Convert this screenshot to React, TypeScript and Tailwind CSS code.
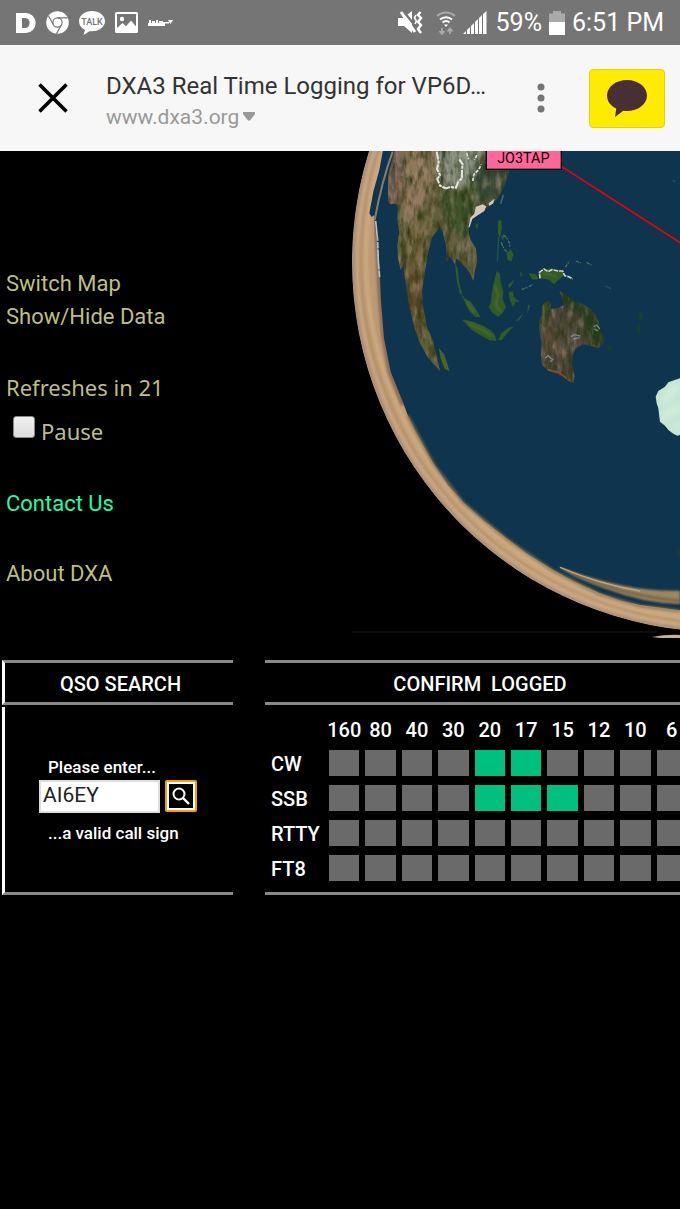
import { useState, type FormEvent } from "react";

const BANDS = ["160", "80", "40", "30", "20", "17", "15", "12", "10", "6"];

const MODES = [
  { name: "CW", logged: ["20", "17"] },
  { name: "SSB", logged: ["20", "17", "15"] },
  { name: "RTTY", logged: [] },
  { name: "FT8", logged: [] },
] as { name: string; logged: string[] }[];

function StatusBar() {
  return (
    <div className="flex h-[45px] items-center justify-between bg-[#757575] pr-4 pl-4 text-white">
      <div className="flex items-center gap-[10px]">
        <svg width="20" height="20" viewBox="0 0 20 20" fill="#fff">
          <path fillRule="evenodd" d="M0 0h10a9.7 10 0 0 1 0 20H0zM6 5v10h3.500c5.500 0 5.500-10 0-10z" />
        </svg>
        <svg width="23" height="23" viewBox="0 0 23 23" fill="none" stroke="#757575" strokeWidth="1.2">
          <circle cx="11.500" cy="11.500" r="11.300" fill="#fff" stroke="none" />
          <circle cx="11.500" cy="11.500" r="4.600" />
          <path d="M11.500 6.900h10.200M7.500 13.800L2.400 5M15.500 13.800l-5.100 9" />
        </svg>
        <svg width="26" height="24" viewBox="0 0 26 24">
          <path d="M13 0C5.800 0 0 4.600 0 10.300c0 3.700 2.300 6.800 6 8.600L4.500 24l6-3.800c8.800 1 15.500-4 15.500-9.900C26 4.600 20.200 0 13 0z" fill="#fff" />
          <text x="13" y="14" textAnchor="middle" fontFamily="Roboto, sans-serif" fontWeight="500" fontSize="9" fill="#757575">TALK</text>
        </svg>
        <svg width="23" height="21" viewBox="0 0 23 21">
          <path fillRule="evenodd" fill="#fff" d="M1.500 0h20A1.500 1.500 0 0 1 23 1.500v18a1.500 1.500 0 0 1-1.500 1.500h-20A1.500 1.500 0 0 1 0 19.500v-18A1.500 1.500 0 0 1 1.500 0zM2 2v14l5.500-5 3.500 3.200L16 8.500l5 6V2z" />
          <circle cx="7" cy="7" r="2.200" fill="#fff" />
        </svg>
        <svg width="25" height="8" viewBox="0 0 25 8" fill="#fff">
          <path d="M0 4h17v3H0zM1 1h2v3H1zM4 2h3v2H4zM8 1h2v3H8zM11 2h4v2h-4zM14 3h7v1.500h-7zM20 1h5l-2.500 4z" />
        </svg>
      </div>

      <div className="flex items-center text-[25px] leading-none">
        <svg width="25" height="23" viewBox="0 0 25 23" className="mr-[13px]">
          <path d="M0 7h5l9-7v22l-8-7H0z" fill="#fff" />
          <path d="M5 0l15 18" stroke="#757575" strokeWidth="2.400" />
          <path d="M3 1l14 20" stroke="#fff" strokeWidth="3" />
          <path d="M22.500 1l-2.500 3 3 3-3 4 3 3-3 4 3 4" fill="none" stroke="#fff" strokeWidth="2.400" />
          <path d="M18 4l-1.500 3 2 3-1.500 3" fill="none" stroke="#fff" strokeWidth="1.600" />
        </svg>
        <svg width="20" height="24" viewBox="0 0 20 24" fill="none" className="mr-[7px]">
          <path d="M1 5a13 13 0 0 1 18 0" stroke="#aaa" strokeWidth="2" />
          <path d="M4 8.500a9 9 0 0 1 12 0M6.500 11.500a5.500 5.500 0 0 1 7 0" stroke="#fff" strokeWidth="2" />
          <path d="M8 13.500h4l-2 2.500z" fill="#fff" />
          <path d="M6 17v5M3.500 20L6 23l2.500-3M14 23v-5M11.500 20.500L14 17.500l2.500 3" stroke="#aaa" strokeWidth="1.800" />
        </svg>
        <svg width="24" height="24" viewBox="0 0 24 24" fill="#fff" className="mr-[9px]">
          <path d="M0 23l3-3v3zM4 19l3-3v7H4zM8 15l3-3v11H8zM12 11l3-3v15h-3zM16 7l3-3v19h-3zM20 3l3.500-3v23H20z" />
        </svg>
        <span>59%</span>
        <svg width="16" height="24" viewBox="0 0 16 24" className="mx-[7px]">
          <path d="M4 0h8v2.500h4V12H0V2.500h4z" fill="#aaa" />
          <path d="M0 11h16v13H0z" fill="#fff" />
        </svg>
        <span>6:51 PM</span>
      </div>
    </div>
  );
}

function BrowserBar() {
  return (
    <header className="flex h-[106px] items-center bg-[#f7f7f7] pr-[15px] pl-[38px]">
      <button type="button" aria-label="Close" className="mr-[38px] shrink-0">
        <svg width="30" height="30" viewBox="0 0 30 30" stroke="#000" strokeWidth="3.600">
          <path d="M1.500 1.500l27 27M28.500 1.500l-27 27" />
        </svg>
      </button>
      <div className="min-w-0 flex-1 pt-[5px]">
        <h1 className="truncate text-[24px] leading-[32px] text-[#333]">DXA3 Real Time Logging for VP6D…</h1>
        <button type="button" className="flex items-center gap-1 text-[21px] leading-[30px] text-[#999]">
          www.dxa3.org
          <svg width="12" height="9" viewBox="0 0 12 9" fill="#999"><path d="M0 0h12v2L7 8.500H5L0 2z" /></svg>
        </button>
      </div>
      <button type="button" aria-label="More options" className="mr-[44px] ml-[36px] shrink-0">
        <svg width="8" height="30" viewBox="0 0 8 30" fill="#757575">
          <circle cx="4" cy="4" r="3.500" />
          <circle cx="4" cy="15" r="3.500" />
          <circle cx="4" cy="26" r="3.500" />
        </svg>
      </button>
      <button type="button" aria-label="Share to chat" className="flex h-[59px] w-[76px] shrink-0 items-center justify-center rounded border border-[#e5d400] bg-[#ffeb00]">
        <svg width="40" height="37" viewBox="0 0 40 37" fill="#472f33">
          <path d="M20 0C9 0 0 6.800 0 15.600c0 5.700 3.600 10.300 9.300 13L8 37l8.300-6.200c1.200.2 2.400.3 3.700.3 11 0 20-6.800 20-15.500S31 0 20 0z" />
        </svg>
      </button>
    </header>
  );
}

function Globe() {
  return (
    <svg width="328" height="487" viewBox="36 18 984 1461" className="shrink-0" role="img" aria-label="Contact map">
      <defs>
        <filter id="terrain" x="0" y="0" width="1" height="1" colorInterpolationFilters="sRGB">
          <feTurbulence type="fractalNoise" baseFrequency="0.06 0.022" numOctaves="4" seed="4" result="n" />
          <feColorMatrix in="n" type="matrix" values="0 0 0 0 0.16  0 0 0 0 0.2  0 0 0 0 0.08  2 0 0 0 -0.800" result="d" />
          <feColorMatrix in="n" type="matrix" values="0 0 0 0 0.600  0 0 0 0 0.540  0 0 0 0 0.430  0 1.600 0 0 -0.750" result="l" />
          <feComposite in="d" in2="SourceGraphic" operator="in" result="dark" />
          <feComposite in="l" in2="SourceGraphic" operator="in" result="light" />
          <feMerge><feMergeNode in="SourceGraphic" /><feMergeNode in="light" /><feMergeNode in="dark" /></feMerge>
        </filter>
        <filter id="soft" x="-30%" y="-30%" width="160%" height="160%"><feGaussianBlur stdDeviation="9" /></filter>
        <filter id="blend" x="-5%" y="-5%" width="110%" height="110%"><feGaussianBlur stdDeviation="3" /></filter>
        <linearGradient id="rim" x1="0" y1="0" x2="0" y2="1">
          <stop offset="0" stopColor="#ad8b6e" />
          <stop offset="0.300" stopColor="#c19e7c" />
          <stop offset="0.600" stopColor="#bd996f" />
          <stop offset="1" stopColor="#cba77c" />
        </linearGradient>
        <clipPath id="disc"><circle cx="1146" cy="351" r="1110" /></clipPath>
        <clipPath id="asia">
          <path d="M165 10L145 90 143 165 150 178 165 176 173 180 171 220 178 260 172 300 174 340 182 375 190 360 194 395 205 470 222 545 240 595 265 640 300 678 292 640 280 590 262 550 250 490 246 440 255 380 265 320 275 280 300 245 308 262 318 300 320 350 330 335 345 358 350 340 370 360 388 382 400 408 405 375 412 350 408 310 392 285 385 258 386 235 400 208 425 205 450 180 470 162 485 140 498 110 508 75 512 10Z" />
        </clipPath>
        <clipPath id="oz">
          <path d="M608 480L625 466 634 478 632 492 655 488 672 480 665 455 658 438 682 452 700 468 728 476 752 492 768 512 778 535 780 552 792 575 790 595 775 610 750 602 728 598 705 612 698 632 696 660 704 692 700 714 680 705 655 688 625 678 606 660 602 625 605 598 598 560 596 530 606 510Z" />
        </clipPath>
      </defs>
      <rect x="36" y="18" width="984" height="1461" fill="#000" />
      <path d="M36 1461H950" stroke="#141414" strokeWidth="4" />
      <path d="M935 1476q45-8 85-6v9h-60z" fill="#c9b190" />

      <g clipPath="url(#disc)">
        <circle cx="1146" cy="351" r="1110" fill="url(#rim)" />
        {/* stretched coastline streaks on the rim */}
        <g fill="none" filter="url(#blend)">
          <circle cx="1146" cy="351" r="1106" stroke="#a68e7c" strokeWidth="9" />
          <circle cx="1146" cy="351" r="1094" stroke="#c9a582" strokeWidth="8" />
          <circle cx="1150" cy="348" r="1088" stroke="#a98a67" strokeWidth="4" />
          <circle cx="1158" cy="342" r="1080" stroke="#cca881" strokeWidth="12" />
          <circle cx="1170" cy="328" r="1074" stroke="#ba9875" strokeWidth="5" />
        </g>
        <path d="M108 230L114 330 122 470 132 580 150 680 190 780" fill="none" stroke="#8d6e58" strokeWidth="16" filter="url(#blend)" />
        <path
          d="M130 10L118 75 100 140 88 205 95 216 103 210 104 230 112 300 116 340 120 400 123 470 132 580 152 680 190 775 203 810 225 855 280 955 325 1020 370 1072 430 1125 500 1180 560 1225 640 1275 700 1308 780 1345 840 1366 900 1380 1020 1396 1030 1396 1030 10Z"
          fill="#0e354d"
        />
        <path d="M158 20Q125 110 104 225" fill="none" stroke="#8c7a69" strokeWidth="6" />
        <path d="M107 228l6 60 2 60 4 50" fill="none" stroke="#c3beb4" strokeWidth="5" strokeDasharray="60 3 20 3" />
        <path d="M203 812L280 957 370 1074 500 1182 640 1278 780 1348 900 1383 1020 1398" fill="none" stroke="#8a7350" strokeWidth="10" opacity="0.700" filter="url(#blend)" />
        <path d="M655 1265Q760 1304 850 1322T1020 1337V1377Q910 1374 800 1332 700 1296 655 1265Z" fill="#a08660" filter="url(#blend)" />
        <path d="M700 1287Q850 1352 1020 1368" fill="none" stroke="#6d5c3c" strokeWidth="9" opacity="0.700" filter="url(#blend)" />
        <path d="M660 1267Q780 1318 900 1338" fill="none" stroke="#c3a47a" strokeWidth="4" />

        <g clipPath="url(#asia)">
          <g filter="url(#terrain)">
            <rect x="130" y="0" width="400" height="700" fill="#625d38" />
            <g filter="url(#soft)">
              <path d="M140 0h70l-30 180h-50z" fill="#84695c" />
              <path d="M210 0h80l-10 110-55 130-40 10z" fill="#92795c" />
              <path d="M290 0h140l-10 110-90 20-40-30z" fill="#8d9686" />
              <path d="M400 60l70-60h60l-30 130-90 60z" fill="#34483a" />
              <path d="M290 140l130-20-30 100 10 60-70-20z" fill="#3f572a" />
              <path d="M190 250l60 10 10 90-30 80-30 20z" fill="#716039" />
              <path d="M195 380l50 10 5 150-30 20z" fill="#604a28" />
              <path d="M230 510l30 50 50 120z" fill="#626331" />
              <path d="M345 270l50 10 10 80-40-10z" fill="#716c50" />
            </g>
          </g>
          <path d="M178 180Q190 70 232 18M195 230Q210 100 255 40M215 250q30-80 55-160M240 265q35-50 45-120" fill="none" stroke="#ac8b69" strokeWidth="6" opacity="0.500" filter="url(#blend)" />
        </g>
        <path d="M290 20l6 32-5 20 9 18-8 12 8 20 18 8 12-4 18 2 6-16 12-14 0-25 2-15-10-15" fill="none" stroke="#e5e5dc" strokeWidth="6" strokeDasharray="24 3 10 2" />
        <path d="M398 108l4-20 14-14 8-16M410 30l-6 15M380 25l6 18" fill="none" stroke="#d9dcd2" strokeWidth="5" strokeDasharray="10 4" />
        <path d="M385 248l6-30 12-12 4-20 20-8 12 6-6 14-22 14-14 10-8 24zM446 175l18-14-4 14-12 8z" fill="#d9c5b7" />
        <path d="M490 150l-8 26" stroke="#46626f" strokeWidth="5" />
        <path d="M296 608l16 20 10 28 6 22-14-6-12-32z" fill="#4c6228" />

        {/* south-east asia */}
        <g fill="#305a26">
          <path d="M345 355L353 370 358 415 366 445 360 448 350 405ZM362 445L374 460 392 470 408 492 422 516 406 516 388 498 374 470Z" />
          <path d="M366 524L376 524 400 530 430 542 450 554 464 568 470 588 448 586 420 570 395 554ZM474 585L484 565 505 548 520 545 500 566 486 584ZM526 530L540 514 550 506 538 524ZM564 478L570 482 562 508Z" />
          <path d="M470 378L480 386 482 410 490 440 488 462 498 486 488 504 474 516 456 502 446 486 452 474 456 440 462 412Z" />
          <path d="M504 420L524 402 516 418 508 430ZM506 442L518 438 522 456 538 470 526 470 520 488 510 466ZM540 378L548 388 542 396ZM565 384L587 388 596 402 578 404Z" />
          <path d="M474 228L484 224 486 250 480 278 474 266ZM500 325L512 312 520 328 514 350 502 344ZM482 270L494 276 488 286ZM405 240L415 235 412 255Z" />
          <path d="M598 382L628 370 666 376 674 390 656 404 642 418 626 404 600 400Z" />
          <path d="M895 503L910 503 906 516 912 516 898 530ZM895 534L901 546 898 572 892 562ZM804 603L818 606 814 618 804 614ZM1008 1225L1020 1213V1237Z" fill="#164128" />
        </g>
        <path d="M463 420l12 30-8 30 14 20M385 535l40 18 30 20M610 385l40 10M380 470l24 34" fill="none" stroke="#456c2f" strokeWidth="7" filter="url(#blend)" />
        <path d="M600 400l-2-18 14-10 12 8 12-6 18 4 14 0 6 14 14 4 10 6" fill="none" stroke="#ccd0c0" strokeWidth="5" strokeDasharray="14 3" />
        <path d="M676 366l14-20M708 348l14 6M740 352l14 8M490 270q18 12 20 36M484 292q8 26 18 28M545 434l20-8 14-8" fill="none" stroke="#4b7268" strokeWidth="4" strokeDasharray="10 3 5 5" />
        <path d="M795 423l18 8M998 106l8 5M472 350l4-75" stroke="#254f5a" strokeWidth="4" />

        <g clipPath="url(#oz)">
          <g filter="url(#terrain)">
            <rect x="580" y="420" width="230" height="310" fill="#4f463a" />
            <g filter="url(#soft)">
              <path d="M590 450h60l-20 60-40 50z" fill="#3a5124" />
              <path d="M660 430l80 40 60 100-10 50-40-20-20-80-60-50z" fill="#213c1c" />
              <path d="M605 540l50 20 20 60-50 20-20-20z" fill="#5a4c38" />
              <path d="M680 560h40l-20 40h-30z" fill="#605950" />
              <path d="M640 680l60 10v30l-50-20z" fill="#52301f" />
            </g>
          </g>
          <path d="M615 640l10-8 10 10M630 650l10-8M693 575l10-6 18 4M700 582l18-4M762 545l8-5 10 12M764 553l10 4" fill="none" stroke="#8f949b" strokeWidth="4" opacity="0.800" />
          <path d="M622 674l34 8 24 18" fill="none" stroke="#8b5336" strokeWidth="4" />
        </g>

        {/* antarctica */}
        <path d="M1030 696L1002 706 985 712 975 725 955 738 947 755 950 775 955 790 960 830 975 842 985 855 1000 866 1012 872 1030 868Z" fill="#c5e5d2" />
        <path d="M1020 722l-26 14-12 24-14 10M1020 790l-30 10-20 20M1020 840l-18 8" fill="none" stroke="#eefbf2" strokeWidth="14" opacity="0.500" filter="url(#soft)" />

        <path d="M664 64l366 235" stroke="#f00000" strokeWidth="5" />
      </g>
      <rect x="439" y="-20" width="225" height="93" fill="#ff6699" stroke="#000" strokeWidth="4" />
      <text x="550" y="53" textAnchor="middle" fontFamily="Roboto, sans-serif" fontSize="43" fill="#100008">JO3TAP</text>
    </svg>
  );
}

function SideMenu() {
  const [paused, setPaused] = useState(false);
  return (
    <nav className="flex min-w-0 flex-1 flex-col items-start pt-[116px] pl-[6px] text-[22px] leading-[33px] text-[#bfbf7f]">
      <a href="#map">Switch Map</a>
      <a href="#data">Show/Hide Data</a>
      <p className="mt-[38px] font-['Noto_Sans']">Refreshes in 21</p>
      <label className="mt-[11px] flex items-center gap-[6px] pl-[7px] font-['Noto_Sans']">
        <input
          type="checkbox"
          checked={paused}
          onChange={(e) => setPaused(e.target.checked)}
          className="mb-[10px] size-[22px] appearance-none rounded-[3px] border border-[#888] bg-linear-to-b from-[#f0f0f0] to-[#dcdcdc] checked:bg-[#999]"
        />
        Pause
      </label>
      <a href="#contact" className="mt-[39px] text-[#1effa5]">Contact Us</a>
      <a href="#about" className="mt-[37px]">About DXA</a>
    </nav>
  );
}

function QsoSearch() {
  const [call, setCall] = useState("AI6EY");
  const submit = (e: FormEvent) => e.preventDefault();
  return (
    <section className="flex w-[231px] shrink-0 flex-col gap-[2px]">
      <h2 className="border-y-[3px] border-l-[3px] border-y-[#888] border-l-white pt-[3px] pl-[3px] text-center text-[20px] leading-[36px] font-medium">QSO SEARCH</h2>
      <form onSubmit={submit} className="flex flex-1 flex-col justify-center border-b-[3px] border-l-[3px] border-b-[#888] border-l-white pl-[34px] text-[17px] font-medium">
        <label htmlFor="call" className="mb-[2px] pl-[9px] leading-[22px]">Please enter...</label>
        <div className="flex items-center gap-[5px]">
          <input
            id="call"
            value={call}
            onChange={(e) => setCall(e.target.value)}
            className="h-[33px] w-[121px] border-2 border-[#ddd] bg-white px-[2px] pb-[2px] text-[21px] font-normal text-[#222] outline-none"
          />
          <button type="submit" aria-label="Search" className="flex size-[32px] items-center justify-center rounded-[2px] border-2 border-[#f5a10a] bg-white p-[2px]">
            <span className="flex size-full items-center justify-center bg-black">
              <svg width="18" height="18" viewBox="0 0 18 18" fill="none" stroke="#fff" strokeWidth="2">
                <circle cx="7" cy="7" r="5.500" />
                <path d="M11 11l6 6" strokeWidth="2.400" />
              </svg>
            </span>
          </button>
        </div>
        <p className="mt-[9px] pl-[9px] leading-[22px]">...a valid call sign</p>
      </form>
    </section>
  );
}

function ConfirmLogged() {
  return (
    <section className="w-[430px] shrink-0">
      <h2 className="border-y-[3px] border-[#888] pt-[3px] text-center text-[20px] leading-[36px] font-medium whitespace-pre">CONFIRM  LOGGED</h2>
      <div className="border-b-[3px] border-[#888] pt-[7px] pb-[7px]">
        <table className="w-[425px] table-fixed border-collapse text-[20px] leading-[26px] font-medium">
          <thead>
            <tr className="h-[33px]">
              <th className="w-[61px] p-0" />
              {BANDS.map((b) => (
                <th key={b} scope="col" className="p-0 pt-[2px] text-center font-medium">{b}</th>
              ))}
            </tr>
          </thead>
          <tbody>
            {MODES.map((m) => (
              <tr key={m.name} className="h-[35px]">
                <th scope="row" className="p-0 pt-[3px] pl-[6px] text-left font-medium">{m.name}</th>
                {BANDS.map((b) => (
                  <td key={b} className="px-[3px] py-0">
                    <div className={`h-[26px] ${m.logged.includes(b) ? "bg-[#00c080]" : "bg-[#6a6a6a]"}`} />
                  </td>
                ))}
              </tr>
            ))}
          </tbody>
        </table>
      </div>
    </section>
  );
}

export default function App() {
  return (
    <div className="min-h-screen overflow-hidden bg-black font-[Roboto,sans-serif] text-white">
      <StatusBar />
      <BrowserBar />
      <main>
        <div className="flex">
          <SideMenu />
          <Globe />
        </div>
        <div className="mt-[22px] flex gap-[32px] pl-[2px]">
          <QsoSearch />
          <ConfirmLogged />
        </div>
      </main>
    </div>
  );
}
